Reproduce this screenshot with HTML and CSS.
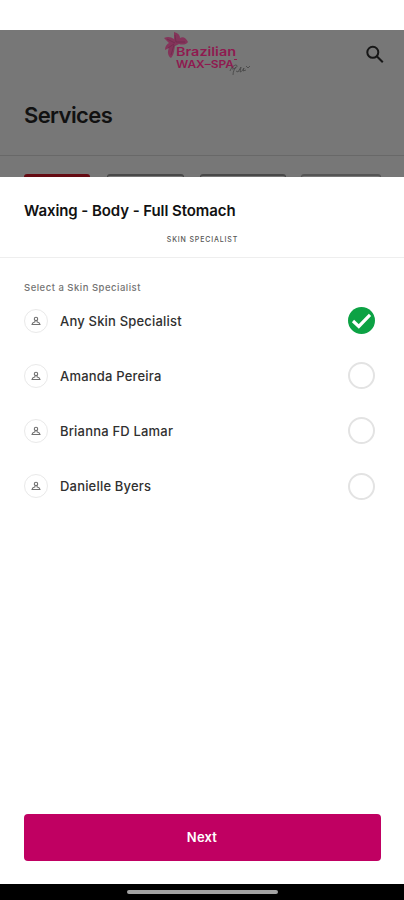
FILE: index.html
```html
<!DOCTYPE html>
<html lang="en">
<head>
<meta charset="utf-8">
<title>Services</title>
<link rel="stylesheet" href="styles.css">
</head>
<body>
<svg class="defs" aria-hidden="true">
  <symbol id="person" viewBox="0 0 12 12">
    <circle cx="6" cy="3.9" r="1.7"/>
    <path d="M5.1 5.5 4.8 7C3 7.3 2.2 8 2 9.5H10C9.8 8 9 7.3 7.2 7L6.9 5.5"/>
  </symbol>
</svg>
<div class="screen">
  <div class="status"></div>
  <div class="page">
    <header class="topbar">
      <svg class="logo" viewBox="0 0 90 48" role="img">
        <path class="flower" d="M12 8 12 1C16 2 18 4 18 7 21 5 24 7 26 11 24 14 20 14 17 13L13 15C12 20 12 24 9 27 6 25 5 21 7 17L3 19C3 15 5 13 7 12L2 7C6 5 9 6 12 8Z"/>
        <path class="petal" d="M14 11 13 4M14 11 23 11M13 12 5 8M12 13 6 17M12 14 9 24"/>
        <text class="brand" x="14" y="24.5" textLength="60" lengthAdjust="spacingAndGlyphs">Brazilian</text>
        <text class="brand small" x="14" y="36.5" textLength="58" lengthAdjust="spacingAndGlyphs">WAX–SPA</text>
        <path class="tm" d="M72 28.5h3"/>
        <path class="script" d="M68 40c1-3 4-6 6-6 3 1-1 4-4 4m1 6c0-4 2-7 3-8m0 4 2 1 3-5-1 5c2 0 3-3 4-4l-1 3 3-1m0-4 2 2 2-2"/>
      </svg>
      <svg class="search" viewBox="0 0 20 20"><circle cx="7.8" cy="7.3" r="5.5"/><path d="m11.8 11.3 6 6"/></svg>
    </header>
    <h1>Services</h1>
    <div class="chips"><i class="chip active"></i><i class="chip second"></i><i class="chip third"></i><i class="chip last"></i></div>
  </div>
  <main class="sheet">
    <h2>Waxing - Body - Full Stomach</h2>
    <div class="tab"><span>SKIN SPECIALIST</span></div>
    <section class="choices">
      <p>Select a Skin Specialist</p>
      <div class="row"><span class="avatar"><svg><use href="#person"/></svg></span><span class="name">Any Skin Specialist</span><span class="radio checked"><svg viewBox="0 0 27 27"><path d="m5 14 5.8 5.4L22 7.8"/></svg></span></div>
      <div class="row"><span class="avatar"><svg><use href="#person"/></svg></span><span class="name">Amanda Pereira</span><span class="radio"></span></div>
      <div class="row"><span class="avatar"><svg><use href="#person"/></svg></span><span class="name">Brianna FD Lamar</span><span class="radio"></span></div>
      <div class="row"><span class="avatar"><svg><use href="#person"/></svg></span><span class="name">Danielle Byers</span><span class="radio"></span></div>
    </section>
    <button>Next</button>
  </main>
  <div class="nav"><i></i></div>
</div>
</body>
</html>
```
FILE: styles.css
```css
* { box-sizing: border-box; }
body { margin: 0; font-family: Inter, "Liberation Sans", sans-serif; background: #fff; }
h1, h2, p { margin: 0; }
.defs { position: absolute; width: 0; height: 0; }
.screen { width: 404px; height: 900px; display: flex; flex-direction: column; overflow: hidden; }
.status { height: 30px; background: #fff; flex: none; }
.page { height: 147px; flex: none; background: #777; display: flex; flex-direction: column; }
.topbar { height: 48px; flex: none; display: flex; justify-content: flex-end; align-items: flex-start; padding: 15px 19px 0 0; }
.logo { width: 90px; height: 48px; margin: -14px 113px 0 0; flex: none; }
.flower { fill: #84345a; }
.petal { fill: none; stroke: #6d2c4b; stroke-width: .8; }
.brand { font: 600 12px/1 Inter, sans-serif; fill: #8f1a50; }
.brand.small { font-size: 10.5px; }
.tm { stroke: #8f1a50; stroke-width: 1; }
.script { fill: none; stroke: #444; stroke-width: .8; }
.search { width: 20px; height: 20px; fill: none; stroke: #171717; stroke-width: 2; }
h1 { height: 77px; padding: 23px 24px 0; font-size: 22px; line-height: 28px; font-weight: 600; letter-spacing: -.6px; color: #111; }
.chips { flex: 1; border-top: 1px solid #686868; padding: 18px 0 0 24px; display: flex; overflow: hidden; }
.chip { height: 24px; flex: none; border: 1px solid #484848; border-top-width: 2px; border-radius: 3px; }
.active { width: 66px; margin-right: 17px; background: #650a12; border-color: #650a12; }
.second { width: 77px; margin-right: 16px; }
.third { width: 86px; margin-right: 15px; }
.last { width: 80px; border-color: #555; }
.sheet { height: 707px; flex: none; background: #fff; display: flex; flex-direction: column; }
h2 { padding: 24px 24px 0; font-size: 15px; line-height: 20px; font-weight: 600; color: #111; white-space: nowrap; letter-spacing: -.08px; }
.tab { height: 37px; border-bottom: 1px solid #eee; text-align: center; padding: 14px 0 0 1px; font-size: 7px; line-height: 10px; font-weight: 500; color: #555; letter-spacing: .85px; }
.choices { padding: 23px 29px 0 24px; flex: 1; }
.choices p { font-size: 9.5px; line-height: 14px; font-weight: 500; color: #737373; letter-spacing: .5px; margin-bottom: -2px; }
.row { height: 55.2px; display: flex; align-items: center; }
.avatar { width: 24px; height: 24px; border: 1px solid #e9e9e9; border-radius: 50%; display: grid; place-items: center; margin-right: 12px; }
.avatar svg { width: 12px; height: 12px; fill: none; stroke: #707070; stroke-width: 1.1; }
.name { flex: 1; font-size: 13px; line-height: 18px; font-weight: 500; color: #303030; letter-spacing: .19px; }
.radio { width: 27px; height: 27px; border: 2px solid #e3e3e3; border-radius: 50%; }
.checked { border: 0; background: #0ca244; }
.checked svg { display: block; width: 27px; height: 27px; fill: none; stroke: #fff; stroke-width: 3.2; }
button { margin: 0 23px 23px 24px; height: 47px; flex: none; border: 0; border-radius: 4px; padding: 0 1px 2px 0; background: #c00062; color: #fff; font: 600 13px Inter, sans-serif; letter-spacing: .2px; }
.nav { height: 16px; background: #000; display: flex; justify-content: center; align-items: center; }
.nav i { width: 151px; height: 4px; border-radius: 2px; background: #a3a3a3; }
```
